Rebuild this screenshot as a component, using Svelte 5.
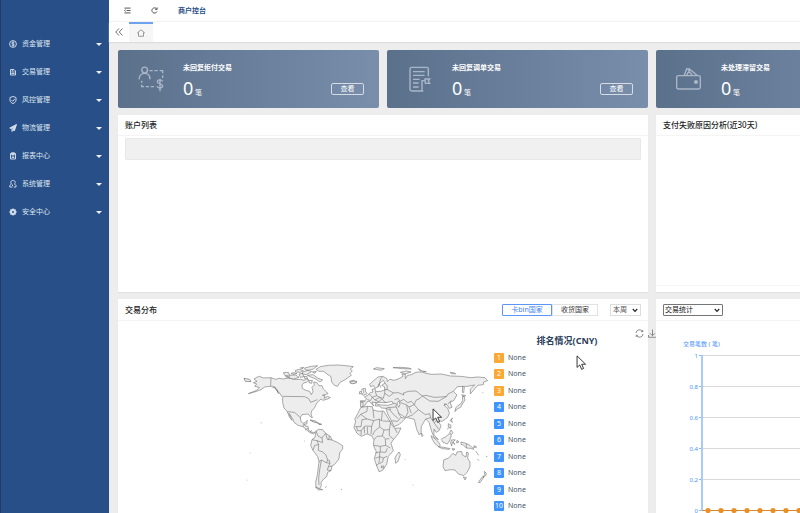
<script>
  const menu = [
    { label: '资金管理', icon: 'coin' },
    { label: '交易管理', icon: 'doc' },
    { label: '风控管理', icon: 'shield' },
    { label: '物流管理', icon: 'plane' },
    { label: '报表中心', icon: 'report' },
    { label: '系统管理', icon: 'user' },
    { label: '安全中心', icon: 'gear' }
  ];
  const cards = [
    { title: '未回复拒付交易', icon: 'refuse' },
    { title: '未回复调单交易', icon: 'order' },
    { title: '未处理滞留交易', icon: 'wallet' }
  ];
  const ranks = [1, 2, 3, 4, 5, 6, 7, 8, 9, 10];
  const ticks = ['1', '0.8', '0.6', '0.4', '0.2', '0'];
  const points = Array.from({ length: 36 }, (_, i) => 27 + i * 13);

  // Western hemisphere outlines
  const west = [
    'M65 82L73 79 86 84 108 83 122 88 132 85 146 87 160 84 178 88 196 88 208 91 214 86 222 90 214 97 206 99 201 105 202 115 212 121 224 124 229 134 234 124 231 112 238 105 236 96 246 98 252 107 261 107 265 117 275 126 279 131 262 136 270 137 267 145 278 139 286 143 278 147 264 151 258 147 246 158 242 166 239 173 230 183 228 191 232 203 226 200 219 192 201 194 196 202 198 214 204 220 211 217 217 211 215 222 208 223 210 228 219 229 221 241 230 247 241 247 236 252 225 248 214 239 204 230 189 226 177 217 173 206 162 190 171 211 163 201 157 185 147 174 143 158 143 142 132 127 119 114 106 109 89 111 78 119 65 124 40 131 65 121 73 112 59 109 65 102 55 98 66 94 57 87Z',
    'M108 83L107 109M143 139L209 140 221 146 227 157 237 153 247 149M157 185L178 187 189 196 197 204M204 230L207 222M210 240L219 235M226 247L230 240',
    'M243 58L256 50 280 46 309 45 333 47 355 50 346 57 352 63 345 70 349 76 340 82 329 90 315 97 308 109 298 106 290 96 288 80 276 72 266 64 252 64Z',
    'M145 68L160 67 164 75 150 77ZM164 76L182 75 192 82 176 87 162 84ZM181 61L194 58 205 62 195 67 182 66ZM203 66L219 61 230 65 214 74 202 72ZM209 54L229 49 248 47 235 57 219 61 210 59ZM217 76L234 74 248 84 263 90 255 96 242 87 230 82ZM192 72L202 70 207 80 196 82ZM208 79L216 80 218 87 209 86ZM152 80L160 79 161 84ZM168 70L178 68 186 71 174 73ZM196 54L206 52 204 56ZM232 66L244 64 240 70ZM222 92L232 91 230 100 222 98Z',
    'M344 94L354 91 366 95 357 101 347 99Z',
    'M27 85L44 88 48 95 31 94ZM113 108L125 117 129 128M118 110L132 132M225 210L241 213 249 219 235 216ZM249 219L260 223 252 224Z',
    'M243 243L251 238 263 239 272 250 286 259 291 270 309 278 323 287 323 297 314 308 312 327 299 343 291 348 288 362 278 367 275 380 267 386 258 397 259 407 253 417 243 413 242 397 247 374 252 335 248 320 234 301 227 286 231 269 240 262Z',
    'M243 243L249 258 261 264 272 250M272 250L277 268 291 270M231 269L246 272 251 284 239 286 234 301M261 264L263 278 246 272M251 284L250 301 263 306 273 315 278 330 274 338 259 330 252 335M274 338L285 340 280 350 291 348M285 340L283 331 278 330M259 330L254 360 251 385 252 405M280 350L277 360 288 362M283 258L281 269',
    'M242 411L253 416 263 419 250 420ZM270 412L275 410M318 418L321 419M77 218L80 219M208 273L210 274M44 309L46 309M35 390L37 391'
  ];
  // Eastern hemisphere outlines
  const east = [
    'M31 153L43 153 50 147 43 140 53 137 59 129 69 126 66 118 75 116 77 125 92 124 105 120 103 110 95 106 105 99 100 91 90 99 83 111 76 115 71 107 62 110 59 103 72 91 84 81 98 79 111 86 112 95 119 88 133 91 149 85 159 79 156 72 166 73 166 86 173 76 184 74 198 67 216 65 227 70 245 73 274 72 301 78 333 79 362 83 384 81 405 83 413 92 401 96 400 104 383 106 372 119 361 132 361 117 374 105 352 109 322 110 310 124 321 135 311 152 300 157 306 172 298 175 292 165 284 161 284 168 293 174 298 190 293 202 278 213 265 214 273 227 268 241 259 247 252 237 252 254 265 269 252 262 245 244 237 217 227 207 214 229 213 248 208 255 200 238 193 208 182 205 163 201 145 189 153 202 166 205 148 223 132 230 124 212 113 192 108 175 94 174 89 168 76 168 78 158 66 156 71 168 59 155 54 153 43 168 32 171Z',
    'M38 116L46 115 47 125 52 131 40 136 35 133 42 127ZM29 125L35 123 34 131 28 132ZM0 96L13 93 20 98 8 101 0 99Z',
    'M32 173L51 169 67 170 69 180 85 184 101 183 111 199 126 225 134 235 153 234 145 251 131 268 123 280 130 302 115 319 110 343 98 361 87 365 81 350 73 326 79 305 70 286 72 269 64 257 51 252 34 259 21 250 12 233 17 213 14 208 23 191Z',
    'M52 169L51 184 32 193 21 206M32 193L51 207 71 212 88 207 94 213 97 184M69 180L72 205M51 207L36 209 33 230 16 230M71 212L65 229 46 228 33 242M65 229L63 253M88 207L89 231 73 244 68 256M89 231L102 240 118 239 122 217M97 213L122 214M118 239L118 257 131 268M102 240L97 258 81 259 72 269M97 258L106 266 107 286 121 294M72 286L91 289 91 306 76 308M91 306L107 307 112 295M107 286L91 289M89 307L89 320 76 325M89 320L100 324 111 319M89 320L87 340 78 347M100 324L98 336 88 341M20 230L22 242 34 242 33 256M42 229L44 250M52 231L53 251M118 266L108 267M134 235L142 249M94 348L101 348 101 354 94 353Z',
    'M98 79L92 87 84 112M105 120L104 130 118 139 131 129 112 119 103 118M76 125L80 137 67 142 58 132M67 142L61 152 52 148M67 142L75 150 89 142 80 137M75 150L87 155 95 147 89 142 100 145 104 130M87 155L95 163 108 160 96 147M81 163L91 160M33 158L39 157 39 169M46 154L31 153M105 99L112 108 111 120M104 158L126 158 139 162 138 171 110 173M131 129L145 128 162 135 160 129 176 124 198 123 217 138 228 136 253 142 276 141 290 139 294 132 310 124M217 138L210 145 198 151 193 164 184 154 173 158 161 148 150 154 144 145 134 149M217 138L239 153 265 154 290 139M144 162L152 158 170 165 177 171 193 164 205 179 226 194 239 191 242 203 227 207M205 179L187 195 172 201M170 165L174 187 166 203M139 171L146 189M108 175L120 180 130 193 145 206M124 212L143 214 153 202M242 203L252 218 259 212M252 218L266 238M290 162L281 166M294 162L304 151M92 113L88 102M120 173L121 180M177 171L184 190',
    'M78 158L90 157 107 158 126 154 130 161 114 166 96 165 84 164ZM141 158L147 153 150 164 146 172Z',
    'M323 167L332 162 338 151 337 140 342 138 345 150 337 162 332 172 321 177 315 185 317 174ZM335 134L347 137 340 140ZM337 127L338 108 343 112 341 128Z',
    'M308 204L304 207 307 217 300 212ZM295 221L303 226 302 235 295 231ZM303 240L309 248 304 254 299 248ZM291 238L298 232M214 249L219 257 216 260Z',
    'M243 257L253 265 265 275 271 286 266 290 255 281 247 268ZM265 290L281 292 300 296 298 298 277 296ZM277 265L285 262 298 251 304 258 298 273 292 282 279 277 274 268ZM304 270L311 269 316 270 309 275 315 283 307 277 305 288 302 280ZM321 271L327 276 320 279ZM333 276L347 280 360 286 372 298 361 295 349 294 341 286 333 283ZM349 280L349 294M372 287L380 291 371 293ZM306 296L315 297 309 301Z',
    'M281 330L296 324 309 310 317 316 321 306 335 304 337 315 348 321 350 306 355 309 353 325 360 336 360 350 352 366 341 377 325 372 315 360 302 359 285 362 279 350ZM340 381L349 383 345 390Z',
    'M147 306L151 314 144 334 137 340 135 324 140 315Z',
    'M403 364L409 370 408 376 399 382 404 374ZM397 380L402 381 390 398 385 397Z',
    'M70 57L80 53 103 56 94 61 82 59ZM129 53L152 52 176 54 184 57 157 56ZM151 67L169 63 183 66 165 72ZM205 56L217 63 229 65 214 66ZM300 67L314 69 317 72 304 71ZM33 117L37 121M377 303L386 316M382 327L387 332M408 319L412 320M188 405L190 406M164 327L166 329M397 127L400 129'
  ];
</script>

{#snippet chevron()}
  <svg class="chev" viewBox="0 0 8 6" aria-hidden="true"><path d="M1 1l3 3.2L7 1" /></svg>
{/snippet}

{#snippet pointer(place)}
  <svg class="pointer {place}" viewBox="0 0 12 18" aria-hidden="true">
    <path d="M1 1v13l3-2.8 2.2 5 2.2-1-2.2-4.8h4.4z" fill="#fff" stroke="#222" stroke-width="1" />
  </svg>
{/snippet}

<div class="app">
  <nav class="side">
    {#each menu as m}
      <a href="#{m.icon}">
        <svg class="mi" viewBox="0 0 16 16" aria-hidden="true">
          {#if m.icon === 'coin'}
            <circle cx="8" cy="8" r="6.8" /><path d="M8 3v10M10.5 5.5c-2-1.6-5-.8-5 .9s5 1.3 5 3.3-3 2.3-5 .8" />
          {:else if m.icon === 'doc'}
            <path d="M3 3h7l3 3v8H3zM5 8h6M5 11h6M5.500 5.500h3" />
          {:else if m.icon === 'shield'}
            <path d="M8 1l6 2v5c0 4-3 6-6 7-3-1-6-3-6-7V3zM5 8l2.500 2.500L11.500 6" />
          {:else if m.icon === 'plane'}
            <path d="M15 1L10.500 14 7.500 11 13 4 5.500 9.500 1.500 8z" fill="#d5deeb" /><path d="M6 10v5l2-3" />
          {:else if m.icon === 'report'}
            <path d="M3 3h10v11H3zM5 1.500h6V5H5zM5.500 8h5M5.500 11h5" />
          {:else if m.icon === 'user'}
            <path d="M5 8C2 4 4 1 8 1s6 3 3 7l3 3v3H9.500M5 8l-3.500 3v3H7M7 9v3" />
          {:else}
            <path d="M8 .8v14.400M.8 8h14.400M2.900 2.900l10.200 10.200M13.100 2.900L2.900 13.100" stroke-width="3" />
            <circle cx="8" cy="8" r="5" fill="#d5deeb" /><circle cx="8" cy="8" r="2" fill="#284f87" stroke="none" />
          {/if}
        </svg>
        <span>{m.label}</span>
        <i></i>
      </a>
    {/each}
  </nav>

  <div class="main">
    <header>
      <button aria-label="菜单"><svg viewBox="0 0 16 16"><path d="M1 2.500h14M6 8h9M1 13.500h14M3.500 6L1 8l2.500 2" /></svg></button>
      <button aria-label="刷新"><svg viewBox="0 0 16 16"><path d="M13.500 10.500A6 6 0 1 1 13 4.500M14 1v4.500H9.500" /></svg></button>
      <a href="#home">商户控台</a>
    </header>
    <div class="tabs">
      <button class="back" aria-label="向左"><svg viewBox="0 0 16 16"><path d="M8 1L1.500 8 8 15M15 1L8.500 8 15 15" /></svg></button>
      <button class="tab" aria-label="首页"><svg viewBox="0 0 16 16"><path d="M8 1.500L1 7.500h2V14.500h10V7.500h2z" /></svg></button>
    </div>

    <div class="scroll">
      <div class="board">
        {#each cards as c}
          <section class="card">
            {#if c.icon === 'refuse'}
              <svg class="ci" viewBox="84 80 78 78" aria-hidden="true">
                <circle cx="104" cy="92" r="8.500" />
                <path d="M87 120c1-12 8-18 17-18s16 6 16 18M118 94h10M133 94h10M149 94h9v8M158 108v8M95 124v6M95 136v6h7M107 142h10M122 142h10M158 126c-3-6-16-6-16 1s16 6 16 13-14 8-17 1M150 118v38" />
              </svg>
            {:else if c.icon === 'order'}
              <svg class="ci" viewBox="81 76 78 78" aria-hidden="true">
                <path d="M130 151H95q-5 0-5-5V85q0-5 5-5h45q5 0 5 5v22M99 93h35M99 104h35M99 116h20M99 127h17M99 139h17M126 151v-31h9v-5h14l-4 6 4 7h-13v-8" />
              </svg>
            {:else}
              <svg class="ci" viewBox="107 78 78 78" aria-hidden="true">
                <rect x="109" y="107" width="71" height="40" rx="5" />
                <path d="M132 106l7-20 8 1 23 19M139 106l9-18M143 90l13 16" />
                <circle cx="167" cy="126" r="4" fill="#b5c2d2" />
              </svg>
            {/if}
            <div class="ct">
              <h3>{c.title}</h3>
              <p><b>0</b> 笔</p>
            </div>
            <button>查看</button>
          </section>
        {/each}

        <section class="panel wide top first">
          <h2>账户列表</h2>
          <div class="bar"></div>
        </section>
        <section class="panel wide top foot">
          <h2>支付失败原因分析(近30天)</h2>
        </section>

        <section class="panel wide low">
          <div class="head">
            <h2>交易分布</h2>
            <div class="seg">
              <button class="on">卡bin国家</button><button>收货国家</button>
            </div>
            <div class="pick week">
              <select aria-label="时间范围"><option>本周</option></select>
              {@render chevron()}
            </div>
          </div>
          <div class="dist">
            <svg class="map" viewBox="235 350 258 150" role="img" aria-label="世界地图">
              <g class="west" transform="translate(235 350) scale(.33333)">{#each west as d}<path {d} />{/each}</g>
              <g class="east" transform="translate(350 350) scale(.33333)">{#each east as d}<path {d} />{/each}</g>
            </svg>
            <div class="rank">
              <h4>排名情况(CNY)</h4>
              <ol>
                {#each ranks as r}
                  <li><em class:hot={r < 4}>{r}</em>None</li>
                {/each}
              </ol>
            </div>
          </div>
          <div class="tools">
            <button aria-label="还原"><svg viewBox="0 0 18 18"><path d="M2 8a7 7 0 0 1 13-3M16 10a7 7 0 0 1-13 3M15.500 2v3.500H12M2.500 16v-3.500H6" /></svg></button>
            <button aria-label="下载"><svg viewBox="0 0 18 18"><path d="M9 1v12M4 8.500l5 5 5-5M1 12v4.500h16V12" /></svg></button>
          </div>
          {@render pointer('p1')}
          {@render pointer('p2')}
        </section>

        <section class="panel wide low">
          <div class="head">
            <div class="pick stat">
              <select aria-label="统计类型"><option>交易统计</option></select>
              {@render chevron()}
            </div>
          </div>
          <div class="chart">
            <p>交易笔数 ( 笔)</p>
            <svg viewBox="0 0 500 180" aria-hidden="true">
              {#each ticks as t, i}
                <line x1="21" x2="500" y1={10.5 + i * 31} y2={10.5 + i * 31} stroke="#d9d9d9" />
                <line x1="18" x2="21" y1={10.5 + i * 31} y2={10.5 + i * 31} stroke="#8bb6fb" />
                <text x="17" y={12.5 + i * 31}>{t}</text>
              {/each}
              <path d="M21 10V166" stroke="#a9caff" stroke-width="2" />
              <path d="M21 165.500H500" stroke="#d98a2c" />
              {#each points as x}<circle cx={x} cy="165.500" r="2.600" fill="#ea8f25" />{/each}
            </svg>
          </div>
        </section>
      </div>
    </div>
  </div>
</div>

<style>
  :global(body) { margin: 0; }
  * { box-sizing: border-box; }
  .app {
    display: flex;
    height: 100vh;
    overflow: hidden;
    background: #ededed;
    color: #222;
    font: 7px/10px "Noto Sans", "Noto Sans CJK SC", sans-serif;
  }
  button, select { font: inherit; color: inherit; background: none; border: 0; padding: 0; margin: 0; }
  svg { display: block; fill: none; }
  h2, h3, h4, p, ol { margin: 0; padding: 0; }

  .side {
    flex: 0 0 109px;
    padding-top: 30px;
    background: #284f87;
    border-left: 1px solid #203c68;
  }
  .side a {
    display: flex;
    align-items: center;
    height: 28px;
    padding: 0 7px 0 8px;
    color: #dde5f0;
    text-decoration: none;
  }
  .mi { width: 8px; height: 8px; margin-right: 5px; stroke: #d5deeb; stroke-width: 1.9; }
  .side span { flex: 1; }
  .side i { border: 3px solid transparent; border-top-color: #eef2f8; border-bottom: 0; }

  .main { flex: 1; min-width: 0; display: flex; flex-direction: column; }
  header {
    display: flex;
    align-items: center;
    height: 22px;
    padding-left: 15px;
    background: #fff;
    border-bottom: 1px solid #f3f3f3;
  }
  header svg { width: 7px; height: 7px; stroke: #444; stroke-width: 2; }
  header button { margin-right: 20px; }
  header a { color: #284f87; font-weight: 700; text-decoration: none; }
  .tabs { display: flex; height: 20px; background: #fff; box-shadow: 0 1px 1px #ddd; }
  .tabs button { display: flex; align-items: center; justify-content: center; }
  .tabs svg { width: 8px; height: 8px; stroke: #555; stroke-width: 1.7; }
  .back { width: 20px; }
  .tab { width: 24px; background: #f6f6f6; border-top: 2px solid #6ea2ec; }
  .tabs .tab svg { stroke: #888; }

  .scroll { flex: 1; overflow: hidden; padding: 8px 9px; }
  .board {
    display: grid;
    grid-template-columns: repeat(4, 1fr);
    gap: 7px 8px;
    min-width: 1068px;
  }
  .first { grid-column-start: 1; }
  .card {
    display: flex;
    height: 58px;
    padding: 0 15px 0 20px;
    border-radius: 2px;
    background: linear-gradient(90deg, #5b708b, #788eab);
    color: #fff;
  }
  .ci { width: 26px; height: 26px; margin: 16px 19px 0 0; stroke: #a9b6c7; stroke-width: 4.2; }
  .ct { flex: 1; padding-top: 13px; }
  h3 { font-size: 7px; line-height: 10px; font-weight: 700; }
  .ct p { line-height: 22px; margin-top: 4px; }
  .ct b { font-size: 18px; font-weight: 400; }
  .card button {
    align-self: flex-end;
    width: 33px;
    height: 12px;
    margin-bottom: 13px;
    border: 1px solid #d5dce5;
    border-radius: 2px;
    line-height: 10px;
  }

  .panel { position: relative; background: #fff; box-shadow: 0 1px 1px #e2e2e2; }
  .wide { grid-column-end: span 2; }
  .top { height: 177px; }
  .low { height: 240px; }
  h2 { font-size: 8px; line-height: 20px; font-weight: 500; color: #222; }
  .top h2 { padding: 0 7px; border-bottom: 1px solid #f4f4f4; }
  .bar { height: 22px; margin: 2px 7px; background: #f0f0f0; border: 1px solid #e8e8e8; border-radius: 1px; }
  .foot { display: flex; flex-direction: column; justify-content: space-between; }
  .foot::after { content: ""; height: 6px; border-top: 1px solid #f4f4f4; }
  .head { display: flex; align-items: center; height: 22px; padding: 0 7px; border-bottom: 1px solid #f4f4f4; }
  .seg { display: flex; margin-left: auto; }
  .seg button { width: 46px; height: 12px; line-height: 10px; border: 1px solid #e2e2e2; color: #333; }
  .seg .on { width: 50px; color: #3f84f5; border-color: #5b97f7; border-radius: 1px 0 0 1px; }
  .pick { position: relative; height: 12px; }
  .pick select { display: block; width: 100%; height: 12px; padding: 0 2px; appearance: none; border: 1px solid #ddd; line-height: 10px; }
  .week { width: 31px; margin-left: 12px; color: #555; }
  .stat { width: 60px; }
  .stat select { border-color: #767676; border-radius: 1px; color: #111; padding: 0 1px; }
  .chev { position: absolute; right: 3px; top: 4px; width: 6px; height: 5px; stroke: #222; stroke-width: 1.5; pointer-events: none; }

  .dist { display: flex; padding: 0 7px 0 117px; }
  .map { width: 258px; height: 150px; margin-top: 29px; fill: #ededed; stroke: #6c6c6c; stroke-linejoin: round; }
  .map path { stroke-width: 1.7; }
  .west path:nth-child(2), .west path:nth-child(8) { fill: none; }
  .west path:nth-child(6) { stroke-width: 2; }
  .east path:nth-child(4), .east path:nth-child(5) { fill: none; }
  .east path:nth-child(6) { fill: #fff; }
  .rank { flex: 1; padding-top: 13px; }
  h4 { font-size: 9px; line-height: 14px; text-align: center; color: #2c405c; }
  ol {
    display: flex;
    flex-direction: column;
    justify-content: space-between;
    height: 158px;
    margin-top: 5px;
    padding-left: 1px;
    list-style: none;
    color: #46566c;
  }
  li { display: flex; align-items: center; gap: 4px; height: 10px; }
  em { width: 10px; height: 10px; font-style: normal; text-align: center; color: #fff; background: #3f94fd; border-radius: 1px; }
  .hot { background: #fba834; }
  .tools { position: absolute; top: 30px; left: 517px; display: flex; gap: 4px; }
  .tools svg { width: 9px; height: 9px; stroke: #777; stroke-width: 1.7; }
  .pointer { position: absolute; width: 11px; height: 16px; }
  .p1 { left: 458px; top: 56px; }
  .p2 { left: 314px; top: 109px; }

  .chart { padding: 18px 0 0 25px; color: #4a90ff; font-size: 6px; }
  .chart p { padding-left: 2px; }
  .chart svg { width: 500px; height: 180px; margin-top: -4px; }
  .chart text { fill: #4a90ff; text-anchor: end; }
</style>
